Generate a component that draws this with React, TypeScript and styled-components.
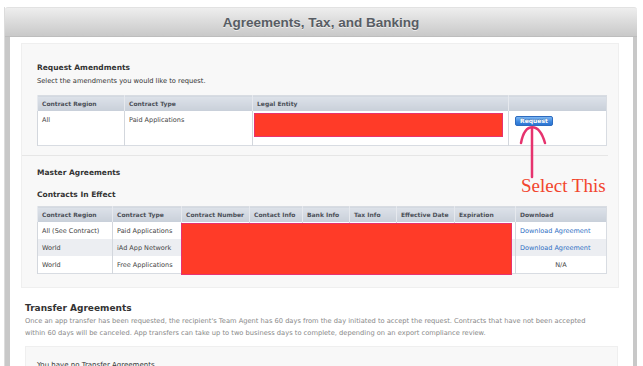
import React from 'react';
import styled, { createGlobalStyle } from 'styled-components';

const GlobalStyle = createGlobalStyle`
  html, body {
    margin: 0;
    padding: 0;
    background: #ffffff;
    overflow: hidden;
  }
  body {
    font-family: "DejaVu Sans", "Liberation Sans", sans-serif;
    color: #333;
  }
`;

const Page = styled.div`
  position: relative;
  height: 366px;
  padding: 7px 6px 0 4px;
  box-sizing: border-box;
  display: flex;
  flex-direction: column;
`;

const Frame = styled.div`
  flex: 1;
  display: flex;
  flex-direction: column;
  border-left: 1px solid #dcdcdc;
`;

const Header = styled.div`
  height: 30px;
  display: flex;
  align-items: center;
  justify-content: center;
  background: linear-gradient(#eeeeee, #d9d9d9 55%, #c9c9c9);
  border-top: 1px solid #e2e2e2;
  border-bottom: 1px solid #bdbdbd;
  border-radius: 3px 3px 0 0;
  box-sizing: border-box;
`;

const Title = styled.h1`
  margin: 0;
  font-family: "Liberation Sans", Arial, sans-serif;
  font-size: 13.5px;
  font-weight: bold;
  color: #585d64;
  text-shadow: 0 1px 0 rgba(255, 255, 255, 0.6);
`;

const Body = styled.div`
  flex: 1;
  background: #fff;
  border-left: 5px solid #c8c8c8;
  border-right: 4px solid #c8c8c8;
  padding-top: 6px;
`;

const Panel = styled.div`
  margin: 0 14px 0 11px;
  background: #f8f8f8;
  border: 1px solid #efefef;
`;

const Section = styled.div<{ $divider?: boolean; $top: number; $bottom: number }>`
  padding: ${p => p.$top}px 13px ${p => p.$bottom}px 15px;
  ${p => p.$divider && 'border-bottom: 1px solid #e6e6e6; margin-right: 10px; padding-right: 3px;'}
`;

const SectionTitle = styled.h3<{ $gap?: number }>`
  margin: ${p => p.$gap ?? 0}px 0 0;
  font-size: 7.5px;
  line-height: 10px;
  font-weight: bold;
  color: #333;
`;

const Hint = styled.p`
  margin: 3px 0 0;
  font-size: 6.7px;
  line-height: 10px;
  color: #333;
`;

const TableWrap = styled.div<{ $gap: number }>`
  position: relative;
  margin-top: ${p => p.$gap}px;
`;

const Table = styled.table`
  width: 100%;
  border-collapse: collapse;
  table-layout: fixed;
  border: 1px solid #d8dce2;
  background: #fff;
  font-size: 6.5px;
`;

const Col = styled.col<{ $w: number }>`
  width: ${p => p.$w}px;
`;

const Th = styled.th`
  height: 15px;
  padding: 0 4px;
  text-align: left;
  font-size: 6px;
  font-weight: bold;
  color: #4b5058;
  background: linear-gradient(#dde2e9, #c8cfd9);
  border-left: 1px solid #e6e9ee;
  white-space: nowrap;
  overflow: hidden;
`;

const Row = styled.tr<{ $shade?: boolean }>`
  background: ${p => (p.$shade ? '#eceef2' : '#ffffff')};
`;

const Td = styled.td<{ $tall?: boolean; $center?: boolean }>`
  height: ${p => (p.$tall ? 29 : 17)}px;
  padding: ${p => (p.$tall ? '5px 4px 0' : '0 4px')};
  vertical-align: ${p => (p.$tall ? 'top' : 'middle')};
  text-align: ${p => (p.$center ? 'center' : 'left')};
  color: #444;
  border-left: 1px solid #d3d7dd;
  white-space: nowrap;
  overflow: hidden;
`;

const EntityCell = styled.td`
  padding: 2px 5px 0 1px;
  vertical-align: top;
  border-left: 1px solid #d3d7dd;
`;

const ButtonCell = styled.td`
  padding: 5px 6px 0;
  vertical-align: top;
  border-left: 1px solid #d3d7dd;
`;

const Redaction = styled.div`
  height: 24px;
  background: #ff3b28;
  border: 1.5px solid #e8336f;
  box-sizing: border-box;
`;

const TableRedaction = styled.div`
  position: absolute;
  left: 144px;
  top: 17px;
  width: 331px;
  height: 52px;
  background: #ff3b28;
  border: 1.5px solid #e8336f;
  box-sizing: border-box;
`;

const RequestButton = styled.button`
  display: block;
  width: 38px;
  height: 10px;
  padding: 0;
  font-family: "DejaVu Sans", sans-serif;
  font-size: 6px;
  font-weight: bold;
  line-height: 8px;
  color: #fff;
  text-shadow: 0 -1px 0 rgba(0, 0, 0, 0.25);
  background: linear-gradient(#7db7f4, #3b86de 60%, #2b74d2);
  border: 1px solid #2e6cbf;
  border-radius: 2px;
  cursor: pointer;
`;

const Link = styled.a`
  color: #2f6fc4;
  text-decoration: none;
`;

const Transfer = styled.div`
  padding: 14px 15px 0;
`;

const TransferTitle = styled.h2`
  margin: 0;
  font-size: 9px;
  line-height: 12px;
  font-weight: bold;
  color: #333;
`;

const TransferText = styled.p`
  margin: 1px 0 0;
  font-size: 6.7px;
  line-height: 12px;
  color: #888;
  white-space: nowrap;
`;

const EmptyBox = styled.div`
  margin-top: 7px;
  padding: 13px 11px;
  background: #f8f8f8;
  border: 1px solid #efefef;
  font-size: 7px;
  line-height: 10px;
  color: #333;
`;

const Annotation = styled.div`
  position: absolute;
  left: 518px;
  top: 124px;
  width: 100px;
`;

const Callout = styled.div`
  margin: -9px 0 0 3px;
  font-family: "Liberation Serif", "Times New Roman", serif;
  font-size: 19px;
  line-height: 22px;
  color: #f2452e;
  white-space: nowrap;
`;

const contracts = [
  { region: 'All (See Contract)', type: 'Paid Applications', download: true },
  { region: 'World', type: 'iAd App Network', download: true },
  { region: 'World', type: 'Free Applications', download: false },
];

const App: React.FC = () => {
  return (
    <>
      <GlobalStyle />
      <Page>
        <Frame>
          <Header>
            <Title>Agreements, Tax, and Banking</Title>
          </Header>
          <Body>
            <Panel>
              <Section $divider $top={19} $bottom={9}>
                <SectionTitle>Request Amendments</SectionTitle>
                <Hint>Select the amendments you would like to request.</Hint>
                <TableWrap $gap={9}>
                  <Table>
                    <colgroup>
                      <Col $w={87} />
                      <Col $w={128} />
                      <Col $w={256} />
                      <Col $w={98} />
                    </colgroup>
                    <thead>
                      <tr>
                        <Th>Contract Region</Th>
                        <Th>Contract Type</Th>
                        <Th>Legal Entity</Th>
                        <Th></Th>
                      </tr>
                    </thead>
                    <tbody>
                      <Row>
                        <Td $tall>All</Td>
                        <Td $tall>Paid Applications</Td>
                        <EntityCell>
                          <Redaction />
                        </EntityCell>
                        <ButtonCell>
                          <RequestButton>Request</RequestButton>
                        </ButtonCell>
                      </Row>
                    </tbody>
                  </Table>
                </TableWrap>
              </Section>

              <Section $top={12} $bottom={13}>
                <SectionTitle>Master Agreements</SectionTitle>
                <SectionTitle $gap={12}>Contracts In Effect</SectionTitle>
                <TableWrap $gap={6}>
                  <Table>
                    <colgroup>
                      <Col $w={75} />
                      <Col $w={69} />
                      <Col $w={68} />
                      <Col $w={53} />
                      <Col $w={47} />
                      <Col $w={47} />
                      <Col $w={58} />
                      <Col $w={61} />
                      <Col $w={91} />
                    </colgroup>
                    <thead>
                      <tr>
                        <Th>Contract Region</Th>
                        <Th>Contract Type</Th>
                        <Th>Contract Number</Th>
                        <Th>Contact Info</Th>
                        <Th>Bank Info</Th>
                        <Th>Tax Info</Th>
                        <Th>Effective Date</Th>
                        <Th>Expiration</Th>
                        <Th>Download</Th>
                      </tr>
                    </thead>
                    <tbody>
                      {contracts.map((c, i) => (
                        <Row key={i} $shade={i === 1}>
                          <Td>{c.region}</Td>
                          <Td>{c.type}</Td>
                          <Td />
                          <Td />
                          <Td />
                          <Td />
                          <Td />
                          <Td />
                          {c.download ? (
                            <Td>
                              <Link href="#">Download Agreement</Link>
                            </Td>
                          ) : (
                            <Td $center>N/A</Td>
                          )}
                        </Row>
                      ))}
                    </tbody>
                  </Table>
                  <TableRedaction />
                </TableWrap>
              </Section>
            </Panel>

            <Transfer>
              <TransferTitle>Transfer Agreements</TransferTitle>
              <TransferText>
                Once an app transfer has been requested, the recipient's Team Agent has 60 days from the day initiated to accept the request. Contracts that have not been accepted
                <br />
                within 60 days will be canceled. App transfers can take up to two business days to complete, depending on an export compliance review.
              </TransferText>
              <EmptyBox>You have no Transfer Agreements</EmptyBox>
            </Transfer>
          </Body>
        </Frame>

        <Annotation>
          <svg width="30" height="56" viewBox="0 0 30 56" fill="none" stroke="#e6336e" strokeWidth="2.5" strokeLinecap="round">
            <path d="M3 19 C7 -2, 21 -2, 27 19" />
            <path d="M14 4 L14 53" />
          </svg>
          <Callout>Select This</Callout>
        </Annotation>
      </Page>
    </>
  );
};

export default App;
